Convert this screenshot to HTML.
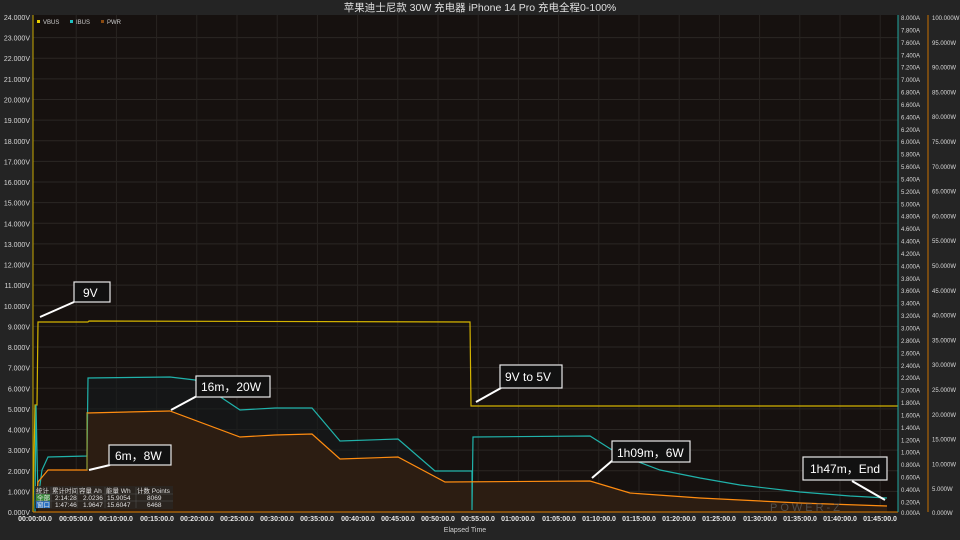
<!DOCTYPE html>
<html><head><meta charset="utf-8"><style>
html,body{margin:0;padding:0;background:#222222;width:960px;height:540px;overflow:hidden}
svg{display:block;font-family:"Liberation Sans","Noto Sans CJK SC",sans-serif}
</style></head><body>
<svg width="960" height="540" viewBox="0 0 960 540">
<rect width="960" height="540" fill="#242424"/>
<text x="480" y="11" fill="#e0e0e0" font-size="10.5" text-anchor="middle">苹果迪士尼款 30W 充电器 iPhone 14 Pro 充电全程0-100%</text>
<rect x="33" y="15" width="865" height="497" fill="#16110f"/>
<g stroke="#2b2724" stroke-width="1">
<line x1="33" x2="898" y1="37.6" y2="37.6"/><line x1="33" x2="898" y1="58.2" y2="58.2"/><line x1="33" x2="898" y1="78.9" y2="78.9"/><line x1="33" x2="898" y1="99.5" y2="99.5"/><line x1="33" x2="898" y1="120.1" y2="120.1"/><line x1="33" x2="898" y1="140.8" y2="140.8"/><line x1="33" x2="898" y1="161.4" y2="161.4"/><line x1="33" x2="898" y1="182" y2="182"/><line x1="33" x2="898" y1="202.6" y2="202.6"/><line x1="33" x2="898" y1="223.3" y2="223.3"/><line x1="33" x2="898" y1="243.9" y2="243.9"/><line x1="33" x2="898" y1="264.5" y2="264.5"/><line x1="33" x2="898" y1="285.1" y2="285.1"/><line x1="33" x2="898" y1="305.8" y2="305.8"/><line x1="33" x2="898" y1="326.4" y2="326.4"/><line x1="33" x2="898" y1="347" y2="347"/><line x1="33" x2="898" y1="367.6" y2="367.6"/><line x1="33" x2="898" y1="388.3" y2="388.3"/><line x1="33" x2="898" y1="408.9" y2="408.9"/><line x1="33" x2="898" y1="429.5" y2="429.5"/><line x1="33" x2="898" y1="450.1" y2="450.1"/><line x1="33" x2="898" y1="470.8" y2="470.8"/><line x1="33" x2="898" y1="491.4" y2="491.4"/>
</g>
<g stroke="#282421" stroke-width="1">
<line y1="15" y2="512" x1="76.2" x2="76.2"/><line y1="15" y2="512" x1="116.4" x2="116.4"/><line y1="15" y2="512" x1="156.6" x2="156.6"/><line y1="15" y2="512" x1="196.8" x2="196.8"/><line y1="15" y2="512" x1="237" x2="237"/><line y1="15" y2="512" x1="277.2" x2="277.2"/><line y1="15" y2="512" x1="317.4" x2="317.4"/><line y1="15" y2="512" x1="357.6" x2="357.6"/><line y1="15" y2="512" x1="397.8" x2="397.8"/><line y1="15" y2="512" x1="438" x2="438"/><line y1="15" y2="512" x1="478.2" x2="478.2"/><line y1="15" y2="512" x1="518.4" x2="518.4"/><line y1="15" y2="512" x1="558.6" x2="558.6"/><line y1="15" y2="512" x1="598.8" x2="598.8"/><line y1="15" y2="512" x1="639" x2="639"/><line y1="15" y2="512" x1="679.2" x2="679.2"/><line y1="15" y2="512" x1="719.4" x2="719.4"/><line y1="15" y2="512" x1="759.6" x2="759.6"/><line y1="15" y2="512" x1="799.8" x2="799.8"/><line y1="15" y2="512" x1="840" x2="840"/><line y1="15" y2="512" x1="880.2" x2="880.2"/>
</g>
<polygon fill="#2c1d12" points="38,512 38,482 48,470 87,470 87,413 170,411 240,437 275,435 312,434 340,459 398,457 445,482 590,481 630,493 700,498 800,503 887,506 887,512"/>
<polygon fill="#151a1c" opacity="0.6" points="88,413 88,378 170,377 195,380 240,410 312,408 340,441 398,439 435,471 472,471 472,482 445,482 398,457 340,459 312,434 240,437 170,411"/>
<polyline fill="none" stroke="#d4b400" stroke-width="1.2" points="33,512 35,405 37,405 38,322 88,322 89,321 470,322 471,406 898,406"/>
<polyline fill="none" stroke="#20b2aa" stroke-width="1.2" points="35,512 36,405 38,500 42,470 48,457 87,456 88,378 170,377 195,380 240,410 275,408 312,408 340,441 398,439 435,471 472,471 472,510 473,437 590,436 620,455 660,470 700,478 740,485 800,492 850,496 887,498"/>
<polyline fill="none" stroke="#ff8c10" stroke-width="1.2" points="36,505 38,482 48,470 87,470 87,413 170,411 240,437 275,435 312,434 340,459 398,457 445,482 590,481 630,493 700,498 800,503 887,506"/>
<line x1="87" y1="413" x2="87" y2="470" stroke="#7aa040" stroke-width="1"/>
<line x1="33" y1="15" x2="33" y2="512" stroke="#c8a800"/>
<line x1="33" y1="512" x2="898" y2="512" stroke="#e08000"/>
<line x1="898" y1="15" x2="898" y2="512" stroke="#20a8a0"/>
<line x1="928" y1="15" x2="928" y2="512" stroke="#c87000"/>
<g fill="#d8d8d8" font-size="7" text-anchor="end">
<text x="30" y="20">24.000V</text><text x="30" y="40.6">23.000V</text><text x="30" y="61.2">22.000V</text><text x="30" y="81.9">21.000V</text><text x="30" y="102.5">20.000V</text><text x="30" y="123.1">19.000V</text><text x="30" y="143.8">18.000V</text><text x="30" y="164.4">17.000V</text><text x="30" y="185">16.000V</text><text x="30" y="205.6">15.000V</text><text x="30" y="226.3">14.000V</text><text x="30" y="246.9">13.000V</text><text x="30" y="267.5">12.000V</text><text x="30" y="288.1">11.000V</text><text x="30" y="308.8">10.000V</text><text x="30" y="329.4">9.000V</text><text x="30" y="350">8.000V</text><text x="30" y="370.6">7.000V</text><text x="30" y="391.3">6.000V</text><text x="30" y="411.9">5.000V</text><text x="30" y="432.5">4.000V</text><text x="30" y="453.1">3.000V</text><text x="30" y="473.8">2.000V</text><text x="30" y="494.4">1.000V</text><text x="30" y="515">0.000V</text>
</g>
<g fill="#d8d8d8" font-size="6">
<text x="901" y="20">8.000A</text><text x="901" y="32.4">7.800A</text><text x="901" y="44.8">7.600A</text><text x="901" y="57.3">7.400A</text><text x="901" y="69.7">7.200A</text><text x="901" y="82.1">7.000A</text><text x="901" y="94.5">6.800A</text><text x="901" y="106.9">6.600A</text><text x="901" y="119.4">6.400A</text><text x="901" y="131.8">6.200A</text><text x="901" y="144.2">6.000A</text><text x="901" y="156.6">5.800A</text><text x="901" y="169">5.600A</text><text x="901" y="181.5">5.400A</text><text x="901" y="193.9">5.200A</text><text x="901" y="206.3">5.000A</text><text x="901" y="218.7">4.800A</text><text x="901" y="231.1">4.600A</text><text x="901" y="243.6">4.400A</text><text x="901" y="256">4.200A</text><text x="901" y="268.4">4.000A</text><text x="901" y="280.8">3.800A</text><text x="901" y="293.2">3.600A</text><text x="901" y="305.7">3.400A</text><text x="901" y="318.1">3.200A</text><text x="901" y="330.5">3.000A</text><text x="901" y="342.9">2.800A</text><text x="901" y="355.3">2.600A</text><text x="901" y="367.8">2.400A</text><text x="901" y="380.2">2.200A</text><text x="901" y="392.6">2.000A</text><text x="901" y="405">1.800A</text><text x="901" y="417.4">1.600A</text><text x="901" y="429.9">1.400A</text><text x="901" y="442.3">1.200A</text><text x="901" y="454.7">1.000A</text><text x="901" y="467.1">0.800A</text><text x="901" y="479.5">0.600A</text><text x="901" y="492">0.400A</text><text x="901" y="504.4">0.200A</text><text x="901" y="515">0.000A</text>
</g>
<g fill="#d8d8d8" font-size="6">
<text x="932" y="20">100.000W</text><text x="932" y="44.8">95.000W</text><text x="932" y="69.6">90.000W</text><text x="932" y="94.4">85.000W</text><text x="932" y="119.2">80.000W</text><text x="932" y="144">75.000W</text><text x="932" y="168.8">70.000W</text><text x="932" y="193.6">65.000W</text><text x="932" y="218.4">60.000W</text><text x="932" y="243.2">55.000W</text><text x="932" y="268">50.000W</text><text x="932" y="292.8">45.000W</text><text x="932" y="317.6">40.000W</text><text x="932" y="342.4">35.000W</text><text x="932" y="367.2">30.000W</text><text x="932" y="392">25.000W</text><text x="932" y="416.8">20.000W</text><text x="932" y="441.6">15.000W</text><text x="932" y="466.4">10.000W</text><text x="932" y="491.2">5.000W</text><text x="932" y="515">0.000W</text>
</g>
<g fill="#e8e8e8" font-size="7" font-weight="bold" text-anchor="middle">
<text x="35" y="521">00:00:00.0</text><text x="76" y="521">00:05:00.0</text><text x="116" y="521">00:10:00.0</text><text x="157" y="521">00:15:00.0</text><text x="197" y="521">00:20:00.0</text><text x="237" y="521">00:25:00.0</text><text x="277" y="521">00:30:00.0</text><text x="317" y="521">00:35:00.0</text><text x="358" y="521">00:40:00.0</text><text x="398" y="521">00:45:00.0</text><text x="438" y="521">00:50:00.0</text><text x="478" y="521">00:55:00.0</text><text x="518" y="521">01:00:00.0</text><text x="559" y="521">01:05:00.0</text><text x="599" y="521">01:10:00.0</text><text x="639" y="521">01:15:00.0</text><text x="679" y="521">01:20:00.0</text><text x="719" y="521">01:25:00.0</text><text x="760" y="521">01:30:00.0</text><text x="800" y="521">01:35:00.0</text><text x="840" y="521">01:40:00.0</text><text x="880" y="521">01:45:00.0</text>
</g>
<text x="465" y="532" fill="#d0d0d0" font-size="7" text-anchor="middle">Elapsed Time</text>
<rect x="37" y="20" width="3" height="3" fill="#e8d000"/><text x="43" y="24" fill="#cccccc" font-size="6">VBUS</text>
<rect x="70" y="20" width="3" height="3" fill="#20c0c0"/><text x="76" y="24" fill="#cccccc" font-size="6">IBUS</text>
<rect x="101" y="20" width="3" height="3" fill="#8a4a10"/><text x="107" y="24" fill="#cccccc" font-size="6">PWR</text>
<text x="770" y="511" fill="#5a5a5a" font-size="11" letter-spacing="3" opacity="0.8">POWER-Z</text>
<g font-size="6.5" fill="#e0e0e0">
<rect x="35" y="486" width="138" height="23" fill="#2a2622" opacity="0.85"/>
<rect x="36" y="494" width="14" height="7" fill="#3a8a3a"/><rect x="36" y="501" width="14" height="7" fill="#2a70c0"/>
<text x="36" y="493">统计</text><text x="52" y="493">累计时间</text><text x="79" y="493">容量 Ah</text><text x="106" y="493">能量 Wh</text><text x="137" y="493">计数 Points</text>
<text x="37" y="500">全部</text><text x="55" y="500">2:14:28</text><text x="83" y="500">2.0236</text><text x="107" y="500">15.9054</text><text x="147" y="500">8069</text>
<text x="37" y="507">窗口</text><text x="55" y="507">1:47:46</text><text x="83" y="507">1.9647</text><text x="107" y="507">15.6047</text><text x="147" y="507">6468</text>
<g stroke="#555" stroke-width="0.5"><line x1="51" y1="487" x2="51" y2="508"/><line x1="77" y1="487" x2="77" y2="508"/><line x1="105" y1="487" x2="105" y2="508"/><line x1="136" y1="487" x2="136" y2="508"/><line x1="35" y1="494" x2="173" y2="494"/><line x1="35" y1="501" x2="173" y2="501"/></g>
</g>
<g font-size="12" fill="#ffffff">
<g stroke="#ffffff" stroke-width="2" fill="none">
<line x1="74" y1="302" x2="40" y2="317"/><line x1="197" y1="396" x2="171" y2="410"/><line x1="110" y1="465" x2="89" y2="470"/>
<line x1="501" y1="388" x2="476" y2="402"/><line x1="613" y1="460" x2="592" y2="478"/><line x1="852" y1="481" x2="885" y2="500"/>
</g>
<rect x="74" y="282" width="36" height="20" fill="#111" stroke="#e8e8e8" stroke-width="1.2"/><text x="83" y="297">9V</text>
<rect x="196" y="376" width="74" height="21" fill="#111" stroke="#e8e8e8" stroke-width="1.2"/><text x="201" y="391">16m，20W</text>
<rect x="109" y="445" width="62" height="20" fill="#111" stroke="#e8e8e8" stroke-width="1.2"/><text x="115" y="460">6m，8W</text>
<rect x="500" y="365" width="62" height="23" fill="#111" stroke="#e8e8e8" stroke-width="1.2"/><text x="505" y="381">9V to 5V</text>
<rect x="612" y="441" width="78" height="21" fill="#111" stroke="#e8e8e8" stroke-width="1.2"/><text x="617" y="457">1h09m，6W</text>
<rect x="803" y="457" width="84" height="23" fill="#111" stroke="#e8e8e8" stroke-width="1.2"/><text x="810" y="473">1h47m，End</text>
</g>
</svg>
</body></html>
